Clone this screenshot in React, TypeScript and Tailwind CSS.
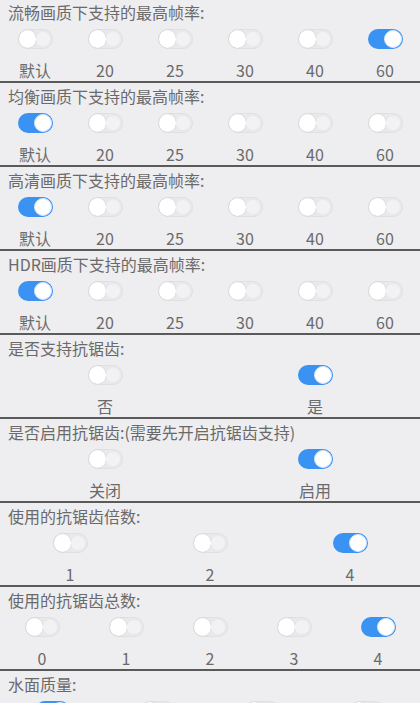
import React from "react";

type Section = { title: string; opts: string[]; on: number };

const sections: Section[] = [
  { title: "流畅画质下支持的最高帧率:", opts: ["默认", "20", "25", "30", "40", "60"], on: 5 },
  { title: "均衡画质下支持的最高帧率:", opts: ["默认", "20", "25", "30", "40", "60"], on: 0 },
  { title: "高清画质下支持的最高帧率:", opts: ["默认", "20", "25", "30", "40", "60"], on: 0 },
  { title: "HDR画质下支持的最高帧率:", opts: ["默认", "20", "25", "30", "40", "60"], on: 0 },
  { title: "是否支持抗锯齿:", opts: ["否", "是"], on: 1 },
  { title: "是否启用抗锯齿:(需要先开启抗锯齿支持)", opts: ["关闭", "启用"], on: 1 },
  { title: "使用的抗锯齿倍数:", opts: ["1", "2", "4"], on: 2 },
  { title: "使用的抗锯齿总数:", opts: ["0", "1", "2", "3", "4"], on: 4 },
];

const cols: Record<number, string> = {
  2: "grid-cols-2",
  3: "grid-cols-3",
  4: "grid-cols-4",
  5: "grid-cols-5",
  6: "grid-cols-6",
};

function Toggle({ on }: { on: boolean }) {
  return on ? (
    <div className="w-[35px] h-[20px] rounded-full bg-[#3a92f3] flex items-center justify-end pr-[1px]">
      <div className="w-[18px] h-[18px] rounded-full bg-white border border-[#d6e6fb]" />
    </div>
  ) : (
    <div className="w-[35px] h-[20px] rounded-full bg-[#e9e9ec] border border-[#e0e0e3] flex items-center justify-between pr-[2px]">
      <div className="w-[18px] h-[18px] rounded-full bg-white shadow-[0_0_1px_rgba(0,0,0,0.25)]" />
      <div className="w-[14px] h-[14px] rounded-full bg-[#f2f2f4]" />
    </div>
  );
}

function Block({ s, first }: { s: Section; first?: boolean }) {
  return (
    <div className="border-b-2 border-[#5a5a5a]">
      <div
        className={`px-[8px] ${first ? "h-[25px] leading-[24px]" : "h-[26px] leading-[26px]"} text-[16px] text-[#6a6a6a] whitespace-nowrap`}
      >
        {s.title}
      </div>
      <div className={`grid ${cols[s.opts.length]} mt-[4px]`}>
        {s.opts.map((o, i) => (
          <div key={i} className="flex flex-col items-center">
            <Toggle on={i === s.on} />
            <div className="mt-[10px] h-[20px] leading-[22px] text-[16px] text-[#6a6a6a]">{o}</div>
          </div>
        ))}
      </div>
      <div className="h-[2px]" />
    </div>
  );
}

export default function App() {
  return (
    <div
      className="w-[420px] h-[720px] bg-white overflow-hidden"
      style={{ fontFamily: '"Noto Sans CJK SC", "Noto Sans", sans-serif' }}
    >
      <div className="bg-[#eeeef1]">
        <Block s={sections[0]} first />
        {sections.slice(1).map((s, i) => (
          <Block key={i} s={s} />
        ))}
        <div className="h-[32px] overflow-hidden">
          <div className="px-[8px] h-[26px] leading-[26px] text-[16px] text-[#6a6a6a]">水面质量:</div>
          <div className="grid grid-cols-4 mt-[4px]">
            {[0, 1, 2, 3].map((i) => (
              <div key={i} className="flex justify-center">
                <Toggle on={i === 0} />
              </div>
            ))}
          </div>
        </div>
      </div>
    </div>
  );
}
